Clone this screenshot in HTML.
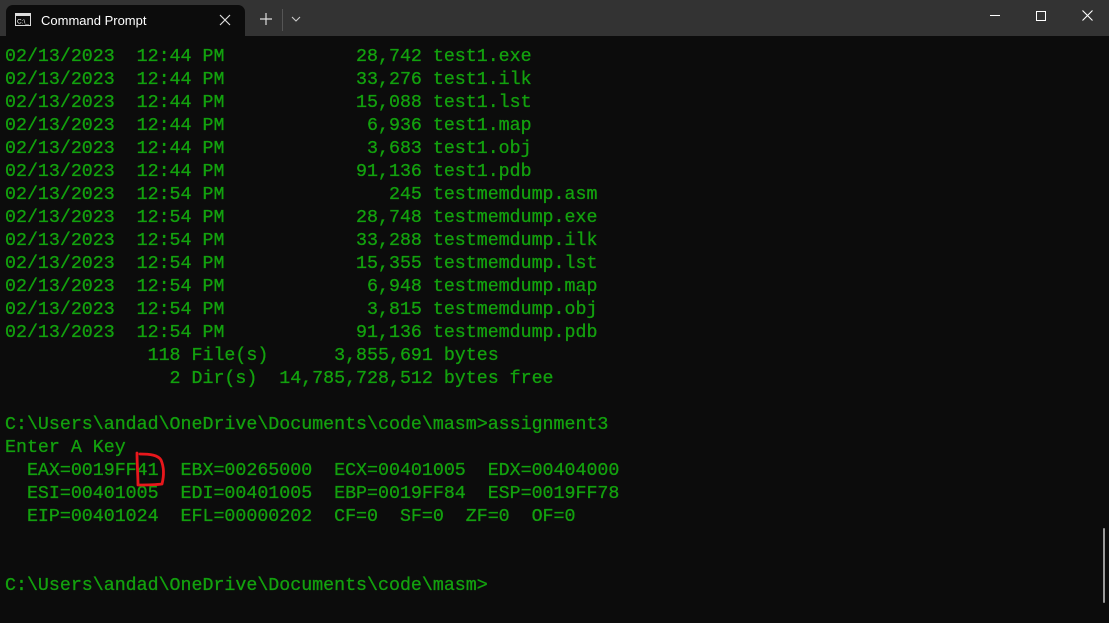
<!DOCTYPE html>
<html><head><style>
html,body{margin:0;padding:0;width:1109px;height:623px;overflow:hidden;background:#0c0c0c}
#bar{position:absolute;left:0;top:0;width:1109px;height:36px;background:#333}
#tab{position:absolute;left:6px;top:5px;width:239px;height:31px;background:#0c0c0c;border-radius:7px 7px 0 0}
#tab .t{position:absolute;left:35px;top:8px;font:13px "Liberation Sans",sans-serif;color:#fff}
pre{position:absolute;left:5px;top:46px;margin:0;font:18.3px/23px "Liberation Mono",monospace;color:#13a10e;-webkit-text-stroke:0.3px #13a10e}
</style></head><body>
<div id="bar"></div>
<div id="tab"><svg style="position:absolute;left:9px;top:8px" width="16" height="13"><rect x="0.5" y="0.5" width="15" height="12" fill="none" stroke="#ddd"/><rect x="1" y="1" width="14" height="2" fill="#ddd"/><text x="2" y="10.5" font-size="6.5" fill="#fff" font-family="Liberation Sans">C:\_</text></svg><span class="t">Command Prompt</span>
<svg style="position:absolute;left:213px;top:9px" width="12" height="12"><path d="M1 1L11 11M11 1L1 11" stroke="#ddd" stroke-width="1.2"/></svg></div>
<svg style="position:absolute;left:260px;top:13px" width="12" height="12"><path d="M6 0V12M0 6H12" stroke="#ddd" stroke-width="1.2"/></svg>
<div style="position:absolute;left:282px;top:9px;width:1px;height:22px;background:#555"></div>
<svg style="position:absolute;left:291px;top:16px" width="10" height="6"><path d="M1 1L5 5L9 1" stroke="#ccc" fill="none" stroke-width="1.1"/></svg>
<div style="position:absolute;left:990px;top:15px;width:10px;height:1px;background:#fff"></div>
<div style="position:absolute;left:1036px;top:11px;width:8px;height:8px;border:1px solid #fff"></div>
<svg style="position:absolute;left:1082px;top:10px" width="11" height="11"><path d="M0.5 0.5L10.5 10.5M10.5 0.5L0.5 10.5" stroke="#fff" stroke-width="1.1"/></svg>
<pre>02/13/2023  12:44 PM            28,742 test1.exe
02/13/2023  12:44 PM            33,276 test1.ilk
02/13/2023  12:44 PM            15,088 test1.lst
02/13/2023  12:44 PM             6,936 test1.map
02/13/2023  12:44 PM             3,683 test1.obj
02/13/2023  12:44 PM            91,136 test1.pdb
02/13/2023  12:54 PM               245 testmemdump.asm
02/13/2023  12:54 PM            28,748 testmemdump.exe
02/13/2023  12:54 PM            33,288 testmemdump.ilk
02/13/2023  12:54 PM            15,355 testmemdump.lst
02/13/2023  12:54 PM             6,948 testmemdump.map
02/13/2023  12:54 PM             3,815 testmemdump.obj
02/13/2023  12:54 PM            91,136 testmemdump.pdb
             118 File(s)      3,855,691 bytes
               2 Dir(s)  14,785,728,512 bytes free

C:\Users\andad\OneDrive\Documents\code\masm>assignment3
Enter A Key
  EAX=0019FF41  EBX=00265000  ECX=00401005  EDX=00404000
  ESI=00401005  EDI=00401005  EBP=0019FF84  ESP=0019FF78
  EIP=00401024  EFL=00000202  CF=0  SF=0  ZF=0  OF=0


C:\Users\andad\OneDrive\Documents\code\masm></pre>
<svg style="position:absolute;left:130px;top:448px" width="40" height="42"><path d="M7 5C7 16 8 27 8 37C16 37 24 37 32 36C34 28 34 19 31 12C28 7 20 6 10 6" fill="none" stroke="#e8171c" stroke-width="2.8" stroke-linecap="round" stroke-linejoin="round"/></svg>
<div style="position:absolute;left:1103px;top:528px;width:2px;height:75px;background:#999;border-radius:1px"></div>
</body></html>
